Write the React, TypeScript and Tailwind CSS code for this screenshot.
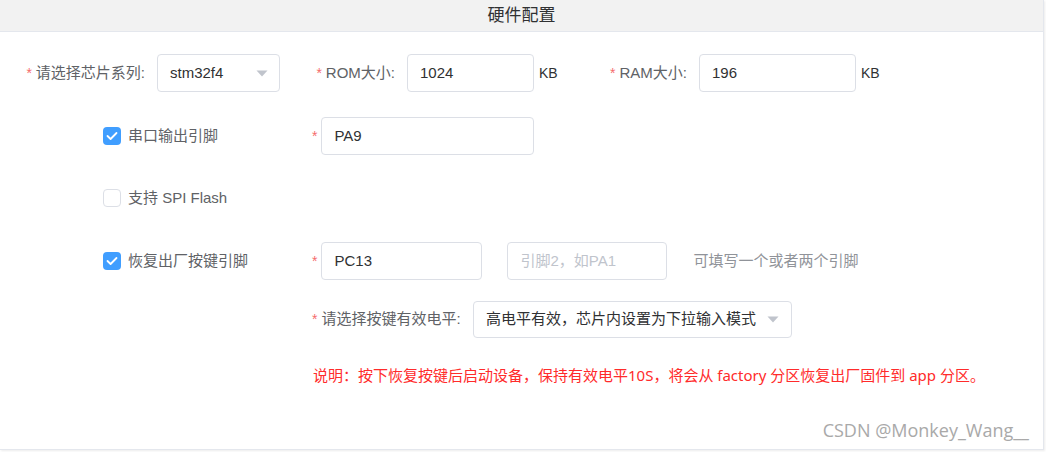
const font = { fontFamily: '"Liberation Sans", "Noto Sans CJK SC", sans-serif' }

const Star = () => <span className="text-[#f56c6c] mr-[4px] text-[14px]">*</span>

const Caret = () => (
  <svg width="12" height="7" viewBox="0 0 12 7" className="shrink-0">
    <path d="M0.5 0.5 L11.5 0.5 L6 6.5 Z" fill="#c0c4cc" />
  </svg>
)

const Box = ({ checked }: { checked: boolean }) =>
  checked ? (
    <span className="w-[18px] h-[18px] rounded-[4px] bg-[#409eff] flex items-center justify-center shrink-0">
      <svg width="12" height="10" viewBox="0 0 12 10">
        <polyline points="1.5,5 4.6,8 10.5,2" fill="none" stroke="#fff" strokeWidth="1.8" strokeLinecap="round" strokeLinejoin="round" />
      </svg>
    </span>
  ) : (
    <span className="w-[18px] h-[18px] rounded-[4px] border border-[#dcdfe6] bg-white shrink-0" />
  )

const Input = ({ w, value, placeholder }: { w: string; value?: string; placeholder?: string }) => (
  <div className={`${w} h-[38px] border border-[#dcdfe6] rounded-[4px] flex items-center px-[12px] text-[15px] whitespace-nowrap ${value ? 'text-[#303133]' : 'text-[#c0c4cc]'}`}>
    {value ?? placeholder}
  </div>
)

export default function App() {
  return (
    <div className="w-[1046px] h-[452px] bg-white overflow-hidden whitespace-nowrap" style={font}>
      <div className="relative w-[1044px] h-[450px] border-r border-b border-[#e4e7ed] shadow-[1px_1px_2px_rgba(0,0,0,0.08)]">
        <div className="h-[32px] bg-[#f2f2f2] border-b border-[#e4e7ed] flex items-center justify-center text-[17px] text-[#303133]">
          硬件配置
        </div>

        <div className="flex flex-col">
          {/* row 1 */}
          <div className="flex items-center h-[38px] mt-[22px] pl-[17px] text-[15px] text-[#606266]">
            <div className="w-[140px] pr-[12px] flex justify-end items-center">
              <Star />请选择芯片系列:
            </div>
            <div className="w-[123px] h-[38px] border border-[#dcdfe6] rounded-[4px] flex items-center justify-between pl-[12px] pr-[11px] text-[#303133]">
              stm32f4<Caret />
            </div>
            <div className="w-[127px] pr-[12px] flex justify-end items-center">
              <Star />ROM大小:
            </div>
            <Input w="w-[127px]" value="1024" />
            <span className="w-[40px] pl-[5px] text-[#303133] text-[14px]">KB</span>
            <div className="w-[125px] pr-[12px] flex justify-end items-center">
              <Star />RAM大小:
            </div>
            <Input w="w-[157px]" value="196" />
            <span className="pl-[5px] text-[#303133] text-[14px]">KB</span>
          </div>

          {/* row 2 */}
          <div className="flex items-center h-[38px] mt-[25px] pl-[103px] text-[15px] text-[#606266]">
            <div className="w-[209px] flex items-center gap-[7px]">
              <Box checked />串口输出引脚
            </div>
            <Star />
            <Input w="w-[213px]" value="PA9" />
          </div>

          {/* row 3 */}
          <div className="flex items-center h-[38px] mt-[24px] pl-[103px] text-[15px] text-[#606266]">
            <div className="flex items-center gap-[7px]">
              <Box checked={false} />支持 SPI Flash
            </div>
          </div>

          {/* row 4 */}
          <div className="flex items-center h-[38px] mt-[25px] pl-[103px] text-[15px] text-[#606266]">
            <div className="w-[209px] flex items-center gap-[7px]">
              <Box checked />恢复出厂按键引脚
            </div>
            <Star />
            <Input w="w-[161px]" value="PC13" />
            <div className="ml-[25px]">
              <Input w="w-[160px]" placeholder="引脚2，如PA1" />
            </div>
            <span className="ml-[26px] text-[#909399]">可填写一个或者两个引脚</span>
          </div>

          {/* row 5 */}
          <div className="flex items-center h-[37px] mt-[21px] pl-[312px] text-[15px] text-[#606266]">
            <div className="w-[161px] pr-[12px] flex items-center">
              <Star />请选择按键有效电平:
            </div>
            <div className="w-[319px] h-[37px] border border-[#dcdfe6] rounded-[4px] flex items-center justify-between pl-[12px] pr-[12px] text-[#303133]">
              高电平有效，芯片内设置为下拉输入模式<Caret />
            </div>
          </div>

          {/* note */}
          <div
            className="mt-[26px] pl-[313px] h-[22px] flex items-center text-[15px] text-[#ff2b2b]"
            style={{ fontFamily: '"Noto Sans", "Noto Sans CJK SC", sans-serif' }}
          >
            说明：按下恢复按键后启动设备，保持有效电平10S，将会从 factory 分区恢复出厂固件到 app 分区。
          </div>
        </div>

        <div
          className="absolute right-[14px] bottom-[5px] text-[18px] text-[#a9a9a9]"
          style={{ fontFamily: '"Open Sans", "Noto Sans", sans-serif' }}
        >
          CSDN @Monkey_Wang__
        </div>
      </div>
    </div>
  )
}
